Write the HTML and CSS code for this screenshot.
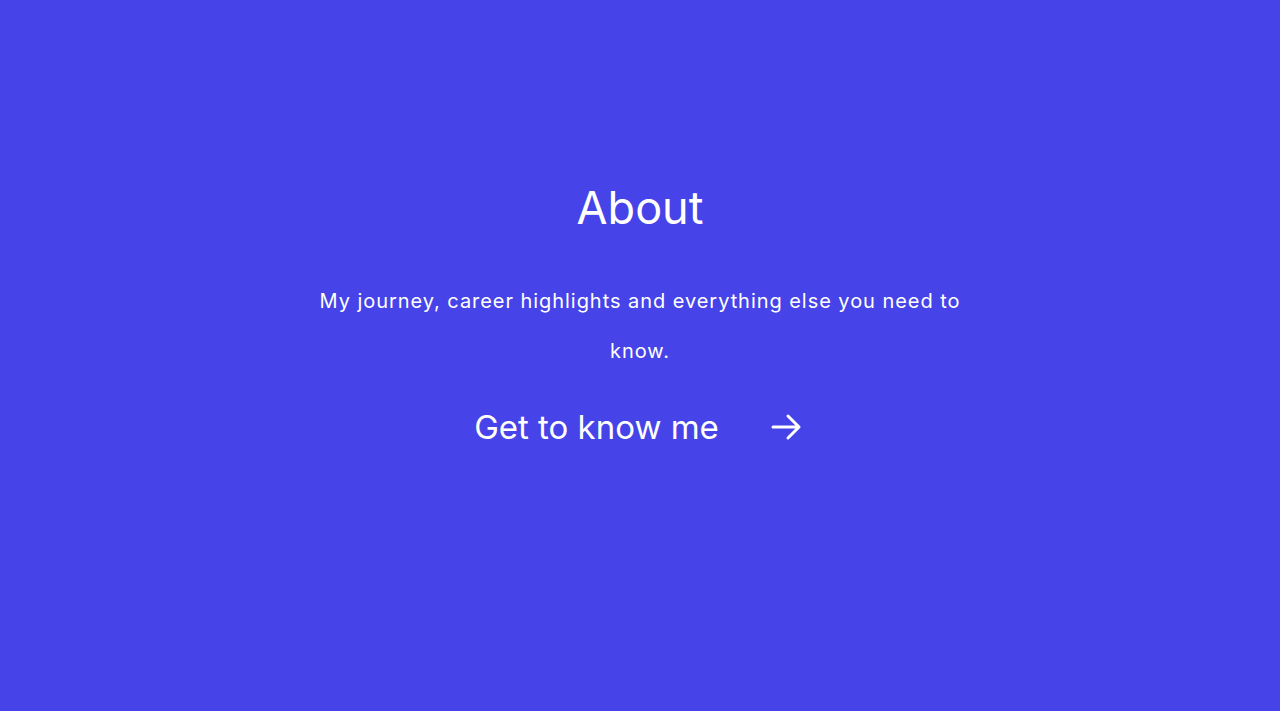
FILE: index.html
```html
<!DOCTYPE html>
<html>
<head>
<meta charset="utf-8">
<link rel="stylesheet" href="styles.css">
</head>
<body>
<section class="about">
  <h1 class="title">About</h1>
  <p class="lead">My journey, career highlights and everything else you need to know.</p>
  <a class="cta" href="#">
    <span class="cta-text">Get to know me</span>
    <svg class="cta-icon" width="32" height="32" viewBox="0 0 32 32" fill="none" stroke="#fff" stroke-width="3" stroke-linecap="round" stroke-linejoin="round"><path d="M3 16H29M18 5L29 16L18 27"/></svg>
  </a>
</section>
</body>
</html>
```
FILE: styles.css
```css
html, body { margin: 0; padding: 0; }
body {
  background: #4644e8;
  color: #fff;
  font-family: "Inter", "Liberation Sans", sans-serif;
  height: 711px;
  overflow: hidden;
}
.about {
  padding-top: 180px;
  display: flex;
  flex-direction: column;
  align-items: center;
  text-align: center;
}
.title {
  margin: 0 0 40px;
  font-size: 45px;
  font-weight: 400;
  line-height: 56px;
}
.lead {
  margin: 0 0 31px;
  max-width: 655px;
  font-size: 20px;
  line-height: 50px;
  letter-spacing: 0.95px;
}
.cta {
  display: flex;
  align-items: center;
  gap: 51px;
  margin-right: 4px;
  color: #fff;
  text-decoration: none;
  font-size: 33px;
  line-height: 40px;
}
.cta-icon { display: block; }
```
